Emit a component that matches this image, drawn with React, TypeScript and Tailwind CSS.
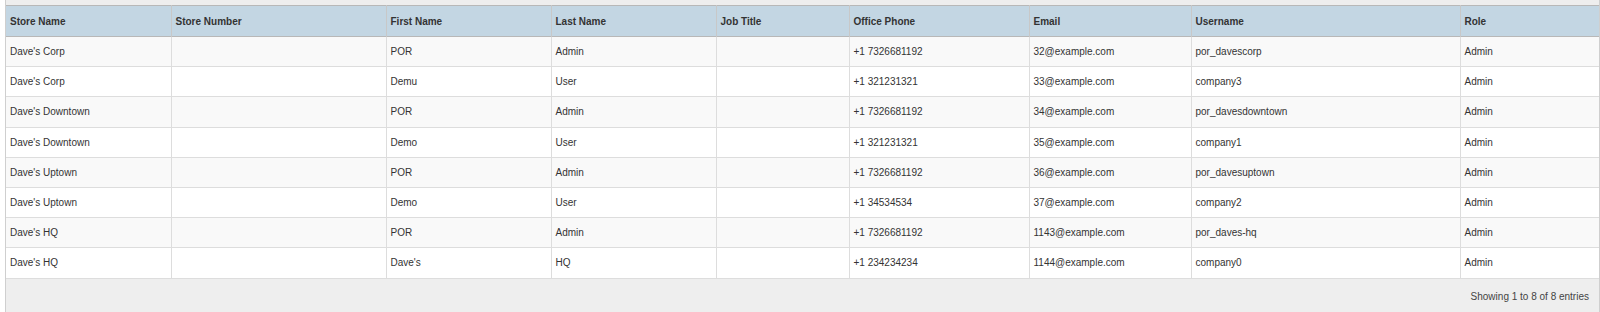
const columns = [
  { label: 'Store Name', width: 'w-[165px]' },
  { label: 'Store Number', width: 'w-[215px]' },
  { label: 'First Name', width: 'w-[165px]' },
  { label: 'Last Name', width: 'w-[165px]' },
  { label: 'Job Title', width: 'w-[133px]' },
  { label: 'Office Phone', width: 'w-[180px]' },
  { label: 'Email', width: 'w-[162px]' },
  { label: 'Username', width: 'w-[269px]' },
  { label: 'Role', width: 'w-auto' },
]

const rows = [
  ["Dave's Corp", '', 'POR', 'Admin', '', '+1 7326681192', '32@example.com', 'por_davescorp', 'Admin'],
  ["Dave's Corp", '', 'Demu', 'User', '', '+1 321231321', '33@example.com', 'company3', 'Admin'],
  ["Dave's Downtown", '', 'POR', 'Admin', '', '+1 7326681192', '34@example.com', 'por_davesdowntown', 'Admin'],
  ["Dave's Downtown", '', 'Demo', 'User', '', '+1 321231321', '35@example.com', 'company1', 'Admin'],
  ["Dave's Uptown", '', 'POR', 'Admin', '', '+1 7326681192', '36@example.com', 'por_davesuptown', 'Admin'],
  ["Dave's Uptown", '', 'Demo', 'User', '', '+1 34534534', '37@example.com', 'company2', 'Admin'],
  ["Dave's HQ", '', 'POR', 'Admin', '', '+1 7326681192', '1143@example.com', 'por_daves-hq', 'Admin'],
  ["Dave's HQ", '', "Dave's", 'HQ', '', '+1 234234234', '1144@example.com', 'company0', 'Admin'],
]

export default function App() {
  return (
    <div className="min-h-[312px] bg-white font-['Liberation_Sans',Arial,sans-serif] text-[10px] text-[#333]">
      <div className="ml-[5px] min-h-[312px] border-x border-[#cfcfcf] bg-[#eeeeee] pt-[5px]">
        <table className="w-full table-fixed border-collapse">
          <colgroup>
            {columns.map((c) => (
              <col key={c.label} className={c.width} />
            ))}
          </colgroup>
          <thead>
            <tr className="border-y border-[#b8b8b8] bg-[#c3d6e3]">
              {columns.map((c, i) => (
                <th
                  key={c.label}
                  className={
                    'h-[31px] px-[4px] text-left align-middle font-bold ' +
                    (i > 0 ? 'border-l border-[#c8c8c8]' : '')
                  }
                >
                  {c.label}
                </th>
              ))}
            </tr>
          </thead>
          <tbody>
            {rows.map((row, r) => (
              <tr key={r} className={'border-b border-[#dddddd] ' + (r % 2 === 0 ? 'bg-[#f9f9f9]' : 'bg-white')}>
                {row.map((cell, i) => (
                  <td
                    key={i}
                    className={
                      'h-[30.2px] truncate px-[4px] align-middle ' +
                      (i > 0 ? 'border-l border-[#dddddd]' : '')
                    }
                  >
                    {cell}
                  </td>
                ))}
              </tr>
            ))}
          </tbody>
        </table>
        <div className="flex h-[35px] items-center justify-end pr-[10px] text-[#444]">
          Showing 1 to 8 of 8 entries
        </div>
      </div>
    </div>
  )
}
